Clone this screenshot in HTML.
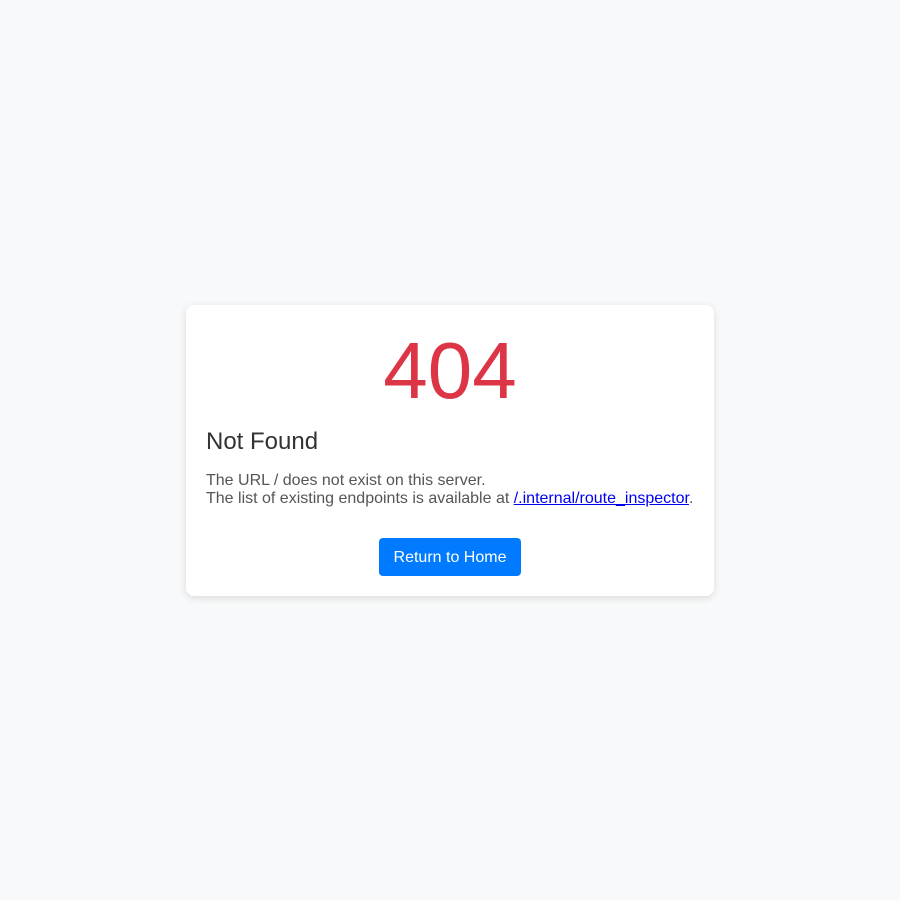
<!DOCTYPE html>
<html><head><style>
html,body{margin:0;padding:0;width:900px;height:900px;background:#f8f9fa;font-family:"Liberation Sans",Arial,sans-serif;}
.card{position:absolute;left:186px;top:305px;width:528px;height:291px;background:#fff;border-radius:8px;box-shadow:0 2px 8px rgba(0,0,0,0.12);box-sizing:border-box;padding:0 20px;}
.code{position:absolute;left:0;right:0;top:321px;text-align:center;font-size:80px;color:#dc3545;line-height:100px;}
h1{position:absolute;left:206px;top:428px;margin:0;font-size:24px;font-weight:normal;color:#333;line-height:28px;}
p{position:absolute;left:206px;top:472px;margin:0;font-size:16px;color:#555;line-height:18px;}
a{color:#0000ee;}
.btn{position:absolute;left:379px;top:538px;width:142px;height:38px;background:#007bff;color:#fff;border-radius:4px;font-size:16px;line-height:39px;text-align:center;}
</style></head><body>
<div class="card"></div>
<div class="code">404</div>
<h1>Not Found</h1>
<p>The URL / does not exist on this server.<br>The list of existing endpoints is available at <a href="#">/.internal/route_inspector</a>.</p>
<div class="btn">Return to Home</div>
</body></html>
